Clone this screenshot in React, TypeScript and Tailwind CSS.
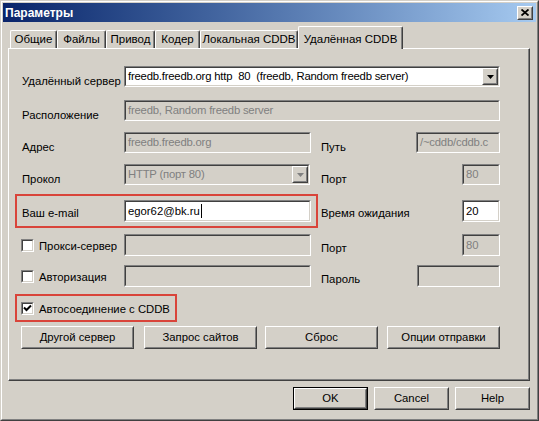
import React from "react";

const font = { fontFamily: '"Liberation Sans", Arial, sans-serif' };

function Sunken({
  className = "",
  bg = "bg-white",
  children,
}: {
  className?: string;
  bg?: string;
  children?: React.ReactNode;
}) {
  return (
    <div
      className={`shrink-0 border border-t-[#808080] border-l-[#808080] border-r-white border-b-white ${className}`}
    >
      <div
        className={`h-full w-full border border-t-[#404040] border-l-[#404040] border-r-[#d4d0c8] border-b-[#d4d0c8] flex items-center overflow-hidden ${bg}`}
      >
        {children}
      </div>
    </div>
  );
}

function Raised({
  className = "",
  children,
}: {
  className?: string;
  children?: React.ReactNode;
}) {
  return (
    <div
      className={`shrink-0 border border-t-white border-l-white border-r-[#404040] border-b-[#404040] bg-[#d4d0c8] ${className}`}
    >
      <div className="h-full w-full border border-t-[#d4d0c8] border-l-[#d4d0c8] border-r-[#808080] border-b-[#808080] flex items-center justify-center">
        {children}
      </div>
    </div>
  );
}

function Arrow({ grey = false }: { grey?: boolean }) {
  return (
    <svg width="7" height="4" viewBox="0 0 7 4">
      <path d="M0 0H7L3.5 4Z" fill={grey ? "#808080" : "#000"} />
    </svg>
  );
}

function Checkbox({ checked = false }: { checked?: boolean }) {
  return (
    <div className="w-[13px] h-[13px] border border-t-[#808080] border-l-[#808080] border-r-white border-b-white shrink-0">
      <div className="h-full w-full border border-t-[#404040] border-l-[#404040] border-r-[#d4d0c8] border-b-[#d4d0c8] bg-white flex items-center justify-center">
        {checked && (
          <svg width="9" height="9" viewBox="0 0 9 9">
            <path d="M1 3.5L3.5 6L8 1.5" stroke="#000" strokeWidth="2" fill="none" />
          </svg>
        )}
      </div>
    </div>
  );
}

function Label({ children, className = "" }: { children: React.ReactNode; className?: string }) {
  return (
    <div className={`text-[11.3px] leading-[14px] text-black whitespace-nowrap ${className}`}>{children}</div>
  );
}

function Tab({ label, w }: { label: string; w: string }) {
  return (
    <div
      className={`${w} h-[18px] border-t border-l border-t-white border-l-white border-r border-r-[#404040] rounded-tl-[2px] rounded-tr-[2px] shadow-[inset_-1px_0_0_#808080] flex items-center justify-center pt-[1px] text-[11.5px] text-black whitespace-nowrap`}
    >
      {label}
    </div>
  );
}

export default function App() {
  return (
    <div
      style={font}
      className="w-[539px] h-[421px] bg-[#d4d0c8] border border-t-[#d4d0c8] border-l-[#d4d0c8] border-r-[#404040] border-b-[#404040] overflow-hidden"
    >
      <div className="h-full w-full border border-t-white border-l-white border-r-[#808080] border-b-[#808080] flex flex-col">
        {/* Title bar */}
        <div className="mx-[1px] mt-[1px] h-[19px] bg-gradient-to-r from-[#0a246a] to-[#a6caf0] flex items-center pl-[2px] pr-[3px]">
          <div className="text-white font-bold text-[12px] leading-none flex-1">Параметры</div>
          <Raised className="w-[16px] h-[14px]">
            <svg width="8" height="7" viewBox="0 0 8 7">
              <path d="M0.5 0.5L7.5 6.5M7.5 0.5L0.5 6.5" stroke="#000" strokeWidth="1.8" />
            </svg>
          </Raised>
        </div>

        {/* Tabs */}
        <div className="mt-[4px] ml-[8px] h-[22px] flex items-end">
          <Tab label="Общие" w="w-[47px]" />
          <Tab label="Файлы" w="w-[49px]" />
          <Tab label="Привод" w="w-[49px]" />
          <Tab label="Кодер" w="w-[45px]" />
          <Tab label="Локальная CDDB" w="w-[98px]" />
          <div className="relative z-10 -mb-[1px] w-[105px] h-[23px] bg-[#d4d0c8] border-t border-l border-t-white border-l-white border-r border-r-[#404040] rounded-tl-[2px] rounded-tr-[2px] shadow-[inset_-1px_0_0_#808080] flex items-start justify-center pt-[4px] text-[11.5px] text-black whitespace-nowrap">
            Удалённая CDDB
          </div>
        </div>

        {/* Panel */}
        <div className="ml-[6px] w-[522px] h-[333px] border border-t-white border-l-white border-r-[#404040] border-b-[#404040] shadow-[inset_-1px_-1px_0_#808080]">
          <div className="pt-[17px] pl-[13px] pr-[29px] flex flex-col text-[11.3px]">
            {/* Row 1 */}
            <div className="flex items-center h-[21px]">
              <Label className="w-[102px] pt-[8px]">Удалённый сервер</Label>
              <Sunken className="w-[376px] h-[21px]">
                <div className="flex-1 pl-[2px] text-black whitespace-nowrap tracking-[-0.2px]">
                  freedb.freedb.org http&nbsp; 80&nbsp; (freedb, Random freedb server)
                </div>
                <Raised className="w-[16px] h-[17px]">
                  <Arrow />
                </Raised>
              </Sunken>
            </div>

            {/* Row 2 */}
            <div className="mt-[13px] flex items-center h-[21px]">
              <Label className="w-[102px] pt-[8px]">Расположение</Label>
              <Sunken className="w-[376px] h-[21px]" bg="bg-[#d4d0c8]">
                <div className="pl-[2px] text-[#808080] whitespace-nowrap tracking-[-0.2px]">freedb, Random freedb server</div>
              </Sunken>
            </div>

            {/* Row 3 */}
            <div className="mt-[11px] flex items-center h-[21px]">
              <Label className="w-[102px] pt-[8px]">Адрес</Label>
              <Sunken className="w-[187px] h-[21px]" bg="bg-[#d4d0c8]">
                <div className="pl-[2px] text-[#808080] whitespace-nowrap tracking-[-0.2px]">freedb.freedb.org</div>
              </Sunken>
              <Label className="ml-[10px] flex-1 pt-[8px]">Путь</Label>
              <Sunken className="w-[84px] h-[21px]" bg="bg-[#d4d0c8]">
                <div className="pl-[2px] text-[#808080] whitespace-nowrap tracking-[-0.2px]">/~cddb/cddb.c</div>
              </Sunken>
            </div>

            {/* Row 4 */}
            <div className="mt-[11px] flex items-center h-[21px]">
              <Label className="w-[102px] pt-[8px]">Прокол</Label>
              <Sunken className="w-[186px] h-[21px]" bg="bg-[#d4d0c8]">
                <div className="flex-1 pl-[2px] text-[#808080] whitespace-nowrap tracking-[-0.2px]">HTTP (порт 80)</div>
                <Raised className="w-[16px] h-[17px]">
                  <Arrow grey />
                </Raised>
              </Sunken>
              <Label className="ml-[11px] flex-1 pt-[8px]">Порт</Label>
              <Sunken className="w-[38px] h-[21px]" bg="bg-[#d4d0c8]">
                <div className="pl-[2px] text-[#808080]">80</div>
              </Sunken>
            </div>

            {/* Row 5 - email */}
            <div className="mt-[9px] flex items-center">
              <div className="-ml-[7px] border-2 border-[#d9443a] pl-[5px] pr-[5px] py-[4px] flex items-center">
                <Label className="w-[102px] pt-[4px]">Ваш e-mail</Label>
                <Sunken className="w-[187px] h-[22px]">
                  <div className="pl-[2px] text-black whitespace-nowrap flex items-center">
                    egor62@bk.ru
                    <span className="inline-block w-[1px] h-[14px] bg-black ml-[1px]" />
                  </div>
                </Sunken>
              </div>
              <Label className="ml-[3px] flex-1 pt-[4px]">Время ожидания</Label>
              <Sunken className="w-[38px] h-[22px]">
                <div className="pl-[2px] text-black">20</div>
              </Sunken>
            </div>

            {/* Row 6 - proxy */}
            <div className="mt-[6px] flex items-center h-[22px]">
              <div className="w-[102px] flex items-center -ml-[1px] mr-[1px]">
                <Checkbox />
                <Label className="ml-[5px] pt-[2px]">Прокси-сервер</Label>
              </div>
              <Sunken className="w-[187px] h-[22px]" bg="bg-[#d4d0c8]" />
              <Label className="ml-[10px] flex-1 pt-[5px]">Порт</Label>
              <Sunken className="w-[38px] h-[22px]" bg="bg-[#d4d0c8]">
                <div className="pl-[2px] text-[#808080]">80</div>
              </Sunken>
            </div>

            {/* Row 7 - auth */}
            <div className="mt-[9px] flex items-center h-[22px]">
              <div className="w-[102px] flex items-center -ml-[1px] mr-[1px]">
                <Checkbox />
                <Label className="ml-[5px] pt-[2px]">Авторизация</Label>
              </div>
              <Sunken className="w-[187px] h-[22px]" bg="bg-[#d4d0c8]" />
              <Label className="ml-[10px] flex-1 pt-[5px]">Пароль</Label>
              <Sunken className="w-[83px] h-[22px]" bg="bg-[#d4d0c8]" />
            </div>

            {/* Autoconnect */}
            <div className="mt-[7px] -ml-[7px] w-[162px] h-[28px] border-2 border-[#d9443a] pl-[4px] flex items-center">
              <Checkbox checked />
              <Label className="ml-[5px] pt-[2px]">Автосоединение с CDDB</Label>
            </div>

            {/* Buttons */}
            <div className="mt-[4px] -ml-[1px] flex items-center">
              <Raised className="w-[113px] h-[23px]">
                <span className="text-[11.3px] text-black">Другой сервер</span>
              </Raised>
              <Raised className="ml-[10px] w-[113px] h-[23px]">
                <span className="text-[11.3px] text-black">Запрос сайтов</span>
              </Raised>
              <Raised className="ml-[8px] w-[113px] h-[23px]">
                <span className="text-[11.3px] text-black">Сброс</span>
              </Raised>
              <Raised className="ml-[9px] w-[113px] h-[23px]">
                <span className="text-[11.3px] text-black">Опции отправки</span>
              </Raised>
            </div>
          </div>
        </div>

        {/* Bottom buttons */}
        <div className="mt-[6px] flex items-center pl-[291px]">
          <div className="w-[75px] h-[23px] border border-black">
            <Raised className="w-full h-full">
              <span className="text-[11.3px] text-black">OK</span>
            </Raised>
          </div>
          <Raised className="ml-[6px] w-[75px] h-[23px]">
            <span className="text-[11.3px] text-black">Cancel</span>
          </Raised>
          <Raised className="ml-[6px] w-[75px] h-[23px]">
            <span className="text-[11.3px] text-black">Help</span>
          </Raised>
        </div>
      </div>
    </div>
  );
}
